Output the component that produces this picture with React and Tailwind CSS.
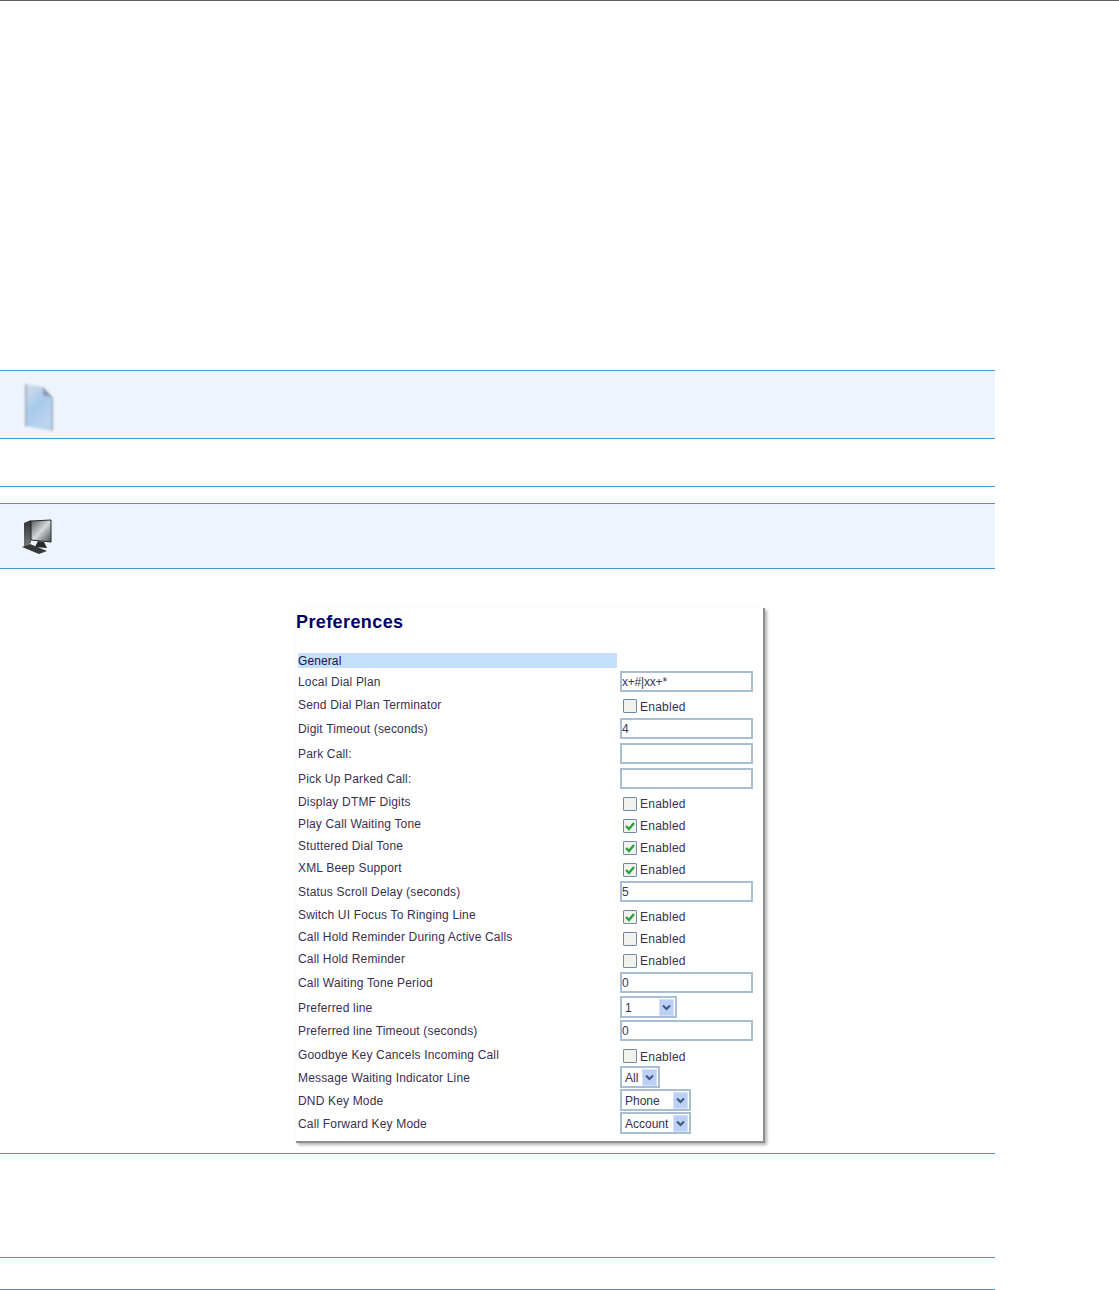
import React from "react";

const rows = [
  { label: "Local Dial Plan", type: "input", value: "x+#|xx+*", h: "h-[23px]" },
  { label: "Send Dial Plan Terminator", type: "check", h: "h-[23px]" },
  { label: "Digit Timeout (seconds)", type: "input", value: "4", h: "h-[25px]" },
  { label: "Park Call:", type: "input", value: "", h: "h-[25px]" },
  { label: "Pick Up Parked Call:", type: "input", value: "", h: "h-[25px]" },
  { label: "Display DTMF Digits", type: "check", h: "h-[22px]" },
  { label: "Play Call Waiting Tone", type: "check", on: true, h: "h-[22px]" },
  { label: "Stuttered Dial Tone", type: "check", on: true, h: "h-[22px]" },
  { label: "XML Beep Support", type: "check", on: true, h: "h-[22px]" },
  { label: "Status Scroll Delay (seconds)", type: "input", value: "5", h: "h-[25px]" },
  { label: "Switch UI Focus To Ringing Line", type: "check", on: true, h: "h-[22px]" },
  { label: "Call Hold Reminder During Active Calls", type: "check", h: "h-[22px]" },
  { label: "Call Hold Reminder", type: "check", h: "h-[22px]" },
  { label: "Call Waiting Tone Period", type: "input", value: "0", h: "h-[26px]" },
  { label: "Preferred line", type: "select", value: "1", w: "w-[57px]", h: "h-[23px]" },
  { label: "Preferred line Timeout (seconds)", type: "input", value: "0", h: "h-[24px]" },
  { label: "Goodbye Key Cancels Incoming Call", type: "check", h: "h-[23px]" },
  { label: "Message Waiting Indicator Line", type: "select", value: "All", w: "w-[40px]", h: "h-[23px]" },
  { label: "DND Key Mode", type: "select", value: "Phone", w: "w-[71px]", h: "h-[23px]" },
  { label: "Call Forward Key Mode", type: "select", value: "Account", w: "w-[71px]", h: "h-[23px]" },
];

const TextBox = ({ value }) => (
  <div className="w-[133px] h-[21px] mb-[1px] border-2 border-[#a9bdd3] bg-white text-[12px] leading-[19px] text-[#3a3550] tracking-[-0.2px]">
    {value}
  </div>
);

const CheckBox = ({ on }) => (
  <div className="flex items-center gap-[3px] pl-[3px] pt-[4px]">
    <div className="w-[14px] h-[14px] -mt-[1px] border border-[#6f8ba8] bg-[#f1f1ee] rounded-[1px] flex items-center justify-center">
      {on && (
        <svg width="12" height="12" viewBox="0 0 12 12">
          <path d="M2 6 L5 9 L10 3" fill="none" stroke="#2aa03a" strokeWidth="2.4" />
        </svg>
      )}
    </div>
    <span className="text-[12px] text-[#37304f] tracking-[0.25px]">Enabled</span>
  </div>
);

const SelectBox = ({ value, w }) => (
  <div className={`${w} h-[22px] mb-[1px] border-2 border-[#a9bdd3] bg-white flex items-center justify-between pr-[1px]`}>
    <span className="pl-[3px] pt-[1px] text-[12px] text-[#37304f]">{value}</span>
    <div className="w-[15px] h-[17px] bg-[#bcd0f5] border border-[#d5e1f8] flex items-center justify-center">
      <svg width="9" height="7" viewBox="0 0 9 7">
        <path d="M1 1.5 L4.5 5 L8 1.5" fill="none" stroke="#3f5679" strokeWidth="2" />
      </svg>
    </div>
  </div>
);

const DocIcon = () => (
  <svg width="38" height="54" viewBox="0 0 38 54" className="blur-[1px]">
    <defs>
      <linearGradient id="doc" x1="0" y1="0" x2="0.6" y2="1">
        <stop offset="0" stopColor="#d8e1eb" />
        <stop offset="0.5" stopColor="#a9caec" />
        <stop offset="1" stopColor="#bcd5ef" />
      </linearGradient>
    </defs>
    <path d="M5 3 L23 6 L33 17 L33 50 L5 45 Z" fill="url(#doc)" />
    <path d="M5 3 L7 3.4 L7 45.4 L5 45 Z" fill="#a3b1c0" />
    <path d="M31.5 17 L33 17 L33 50 L31.5 49.7 Z" fill="#9dacbc" />
    <path d="M23 6 L23 14 L33 17 Z" fill="#8a9bad" />
  </svg>
);

const PcIcon = () => (
  <svg width="34" height="38" viewBox="0 0 34 38" className="blur-[0.6px]">
    <defs>
      <linearGradient id="screen" x1="0" y1="0" x2="1" y2="1">
        <stop offset="0" stopColor="#55585c" />
        <stop offset="0.5" stopColor="#d5d8da" />
        <stop offset="1" stopColor="#4a4d51" />
      </linearGradient>
      <linearGradient id="tower" x1="0" y1="0" x2="0" y2="1">
        <stop offset="0" stopColor="#2f3133" />
        <stop offset="1" stopColor="#77797c" />
      </linearGradient>
    </defs>
    <path d="M5 5 L12 2 L12 25 L5 29 Z" fill="url(#tower)" />
    <path d="M12 3 L32 2 L32 24 L12 22 Z" fill="url(#screen)" stroke="#26282a" strokeWidth="1" />
    <path d="M19 23 L25 24 L28 30 L16 29 Z" fill="#26282a" />
    <path d="M3 29 L11 26 L28 33 L20 36 Z" fill="#36383a" />
  </svg>
);

const App = () => {
  return (
    <div className="w-[1119px] h-[1290px] bg-white overflow-hidden font-['Liberation_Sans',Arial,sans-serif]">
      <div className="h-px bg-[#5f5f5f]" />

      <div className="w-[995px] mt-[369px]">
        <div className="h-[69px] border-y border-[#4a98d3] bg-[#eef4fb] pl-[20px] flex items-start">
          <div className="mt-[10px]"><DocIcon /></div>
        </div>
        <div className="h-[48px] border-b border-[#4a98d3]" />
        <div className="mt-[16px] h-[66px] border-y border-[#4a98d3] bg-[#eef4fb] pl-[19px] flex items-start">
          <div className="mt-[14px]"><PcIcon /></div>
        </div>

        {/* PREFERENCES PANEL */}
        <div className="ml-[296px] mt-[39px] w-[469px] h-[535px] bg-white border-r-2 border-b-2 border-[#8f8f8f] shadow-[2px_2px_3px_rgba(0,0,0,0.3)]">
          <h1 className="pt-[2px] text-[18px] leading-[24px] font-bold text-[#000066] tracking-[0.4px]">Preferences</h1>
          <div className="ml-[2px] mt-[19px] w-[319px] h-[15px] bg-[#c3dffa] text-[12px] leading-[16px] text-[#14144f] tracking-[0.1px]">General</div>
          <div className="mt-[2px] ml-[2px]">
            {rows.map((row) => (
              <div key={row.label} className={`${row.h} flex items-center`}>
                <div className="w-[322px] text-[12px] text-[#37304f] tracking-[0.17px]">{row.label}</div>
                {row.type === "input" && <TextBox value={row.value} />}
                {row.type === "check" && <CheckBox on={row.on} />}
                {row.type === "select" && <SelectBox value={row.value} w={row.w} />}
              </div>
            ))}
          </div>
        </div>

        <div className="mt-[10px] h-px bg-[#4a98d3]" />
        <div className="mt-[103px] h-px bg-[#4a98d3]" />
        <div className="mt-[31px] h-px bg-[#4a98d3]" />
      </div>
    </div>
  );
};

export default App;
